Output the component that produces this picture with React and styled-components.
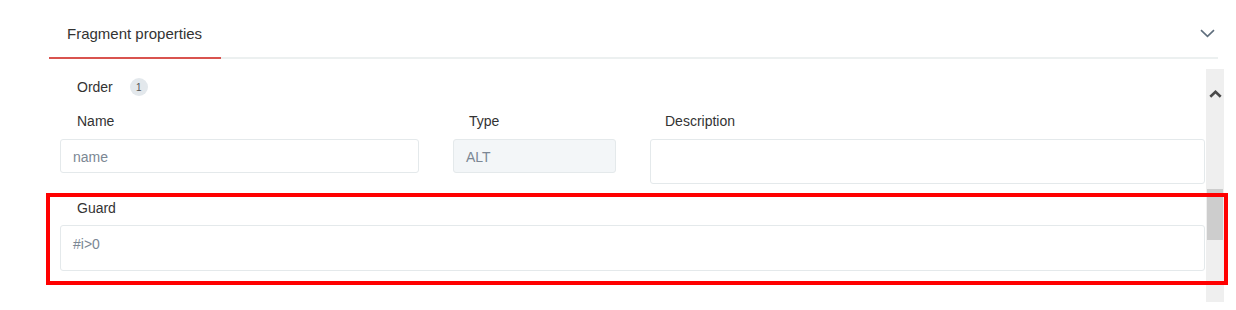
import React from "react";
import styled, { createGlobalStyle } from "styled-components";

const Global = createGlobalStyle`
  html, body { margin: 0; padding: 0; background: #fff; }
  body { font-family: "Liberation Sans", Arial, sans-serif; color: #333; }
  * { box-sizing: border-box; }
`;

const Page = styled.div`
  position: relative;
  width: 1236px;
  height: 310px;
  padding-left: 49px;
`;

const Header = styled.div`
  width: 1169px;
  height: 59px;
  display: flex;
  align-items: stretch;
  justify-content: space-between;
  border-bottom: 2px solid #ecf0f0;
`;

const Tab = styled.div`
  width: 172px;
  padding: 25px 0 0 18px;
  font-size: 15px;
  line-height: 18px;
  color: #333;
  border-bottom: 2px solid #d9534f;
  margin-bottom: -2px;
`;

const Toggle = styled.div`
  padding: 24px 3px 0 0;
  color: #5f6e7d;
`;

const Body = styled.div`
  margin-top: 10px;
  width: 1175px;
  height: 233px;
  display: flex;
`;

const Content = styled.div`
  flex: 1;
  padding: 9px 1px 0 11px;
`;

const OrderRow = styled.div`
  display: flex;
  align-items: center;
  gap: 17px;
  height: 18px;
  padding-left: 17px;
  font-size: 14px;
`;

const Badge = styled.span`
  width: 18px;
  height: 18px;
  border-radius: 50%;
  background: #e3e8ec;
  color: #555;
  font-size: 10px;
  display: inline-flex;
  align-items: center;
  justify-content: center;
`;

const Row = styled.div`
  display: grid;
  grid-template-columns: ${(p) => p.$cols};
  column-gap: 34px;
  margin-top: ${(p) => p.$top}px;
`;

const Field = styled.div`
  display: flex;
  flex-direction: column;
`;

const Label = styled.div`
  font-size: 14px;
  line-height: 18px;
  color: #333;
  padding-left: ${(p) => p.$indent || 16}px;
  margin-bottom: ${(p) => p.$gap || 9}px;
`;

const Input = styled.div`
  height: ${(p) => p.$h || 34}px;
  border: 1px solid #e4e9eb;
  border-radius: 3px;
  background: ${(p) => (p.$disabled ? "#f3f6f8" : "#fff")};
  padding: ${(p) => (p.$top ? "9px 12px" : "1px 12px 0")};
  display: flex;
  align-items: ${(p) => (p.$top ? "flex-start" : "center")};
  font-size: 14px;
  line-height: 18px;
  color: #7b8794;
`;

const Scrollbar = styled.div`
  width: 18px;
  background: #efefef;
  display: flex;
  flex-direction: column;
  align-items: center;
`;

const ArrowBtn = styled.div`
  height: 48px;
  width: 100%;
  display: flex;
  align-items: center;
  justify-content: center;
  padding-top: 2px;
`;

const Thumb = styled.div`
  margin-top: 72px;
  width: 16px;
  height: 51px;
  background: #cdcdcd;
`;

const Highlight = styled.div`
  position: absolute;
  left: 46px;
  top: 193px;
  width: 1182px;
  height: 92px;
  border: 4px solid #ff0000;
  pointer-events: none;
`;

export default function App() {
  return (
    <>
      <Global />
      <Page>
        <Header>
          <Tab>Fragment properties</Tab>
          <Toggle>
            <svg width="15" height="9" viewBox="0 0 15 9" fill="none">
              <path d="M1 1.2 L7.5 7.4 L14 1.2" stroke="currentColor" strokeWidth="1.6" />
            </svg>
          </Toggle>
        </Header>
        <Body>
          <Content>
            <OrderRow>
              <span>Order</span>
              <Badge>1</Badge>
            </OrderRow>
            <Row $cols="359px 163px 1fr" $top={16}>
              <Field>
                <Label $indent={17}>Name</Label>
                <Input>name</Input>
              </Field>
              <Field>
                <Label>Type</Label>
                <Input $disabled>ALT</Input>
              </Field>
              <Field>
                <Label $indent={15}>Description</Label>
                <Input $h={45} />
              </Field>
            </Row>
            <Row $cols="1fr" $top={15}>
              <Field>
                <Label $indent={17} $gap={8}>Guard</Label>
                <Input $h={46} $top>#i&gt;0</Input>
              </Field>
            </Row>
          </Content>
          <Scrollbar>
            <ArrowBtn>
              <svg width="13" height="8" viewBox="0 0 13 8" fill="none">
                <path d="M1.3 6.8 L6.5 1.8 L11.7 6.8" stroke="#4a4a4a" strokeWidth="2.6" />
              </svg>
            </ArrowBtn>
            <Thumb />
          </Scrollbar>
        </Body>
        <Highlight />
      </Page>
    </>
  );
}
